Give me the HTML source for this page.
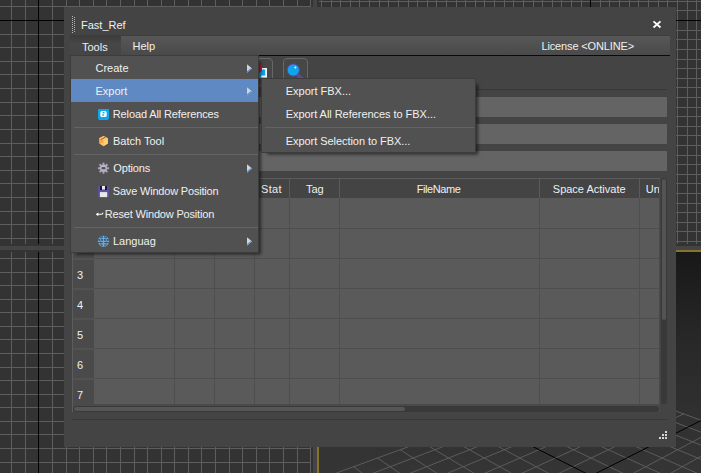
<!DOCTYPE html>
<html><head><meta charset="utf-8"><title>Fast_Ref</title>
<style>
html,body{margin:0;padding:0;}
body{width:701px;height:473px;overflow:hidden;position:relative;background:#333;font-family:"Liberation Sans",sans-serif;font-size:11px;color:#f0f0f0;}
.a{position:absolute;}
.t{position:absolute;white-space:nowrap;line-height:13px;height:13px;}
#win{left:64px;top:7px;width:612px;height:440px;background:#444444;}
#menubar{left:70px;top:35px;width:600px;height:20px;background:linear-gradient(#3e3e3e 0,#3e3e3e 1px,#575757 1px,#4a4a4a 20px);}
#tools{left:70px;top:36px;width:51px;height:19px;background:linear-gradient(#3c3c3c,#474747 40%,#454545);}
.fld{position:absolute;left:73px;width:594px;height:20px;background:#646464;border-radius:1px;}
.btn{position:absolute;top:58px;width:23px;height:26px;border:1px solid #676767;border-radius:4px;background:#474747;}
.menu{position:absolute;background:#515151;border:1px solid #3c3c3c;box-sizing:border-box;box-shadow:4px 3.5px 3px -2px rgba(0,0,0,.55);}
.sep{position:absolute;height:1px;background:#636363;}
.hl{position:absolute;background:#5e89c3;}
.arr{position:absolute;width:6px;height:9px;}
.rh{position:absolute;left:73px;width:21px;background:#444;}
</style></head>
<body>
<svg width="701" height="473" viewBox="0 0 701 473" style="position:absolute;left:0;top:0" shape-rendering="crispEdges">
<rect width="701" height="473" fill="#444444"/>
<rect x="0" y="0" width="313" height="246" fill="#333333"/>
<path d="M11.5 0V244M25.5 0V244M52.5 0V244M66.5 0V244M79.5 0V244M93.5 0V244M106.5 0V244M120.5 0V244M134.5 0V244M147.5 0V244M161.5 0V244M174.5 0V244M188.5 0V244M201.5 0V244M215.5 0V244M229.5 0V244M242.5 0V244M256.5 0V244M269.5 0V244M283.5 0V244M297.5 0V244M310.5 0V244M0 6.5H311M0 34.5H311M0 47.5H311M0 61.5H311M0 74.5H311M0 88.5H311M0 102.5H311M0 115.5H311M0 129.5H311M0 143.5H311M0 156.5H311M0 170.5H311M0 183.5H311M0 197.5H311M0 211.5H311M0 224.5H311M0 238.5H311" stroke="#5e5e5e" stroke-width="1" fill="none"/>
<path d="M38.5 0V244M0 20.5H311" stroke="#000" stroke-width="1" fill="none"/>
<rect x="0" y="250" width="313" height="223" fill="#333333"/>
<path d="M11.5 252V473M25.5 252V473M52.5 252V473M66.5 252V473M79.5 252V473M93.5 252V473M106.5 252V473M120.5 252V473M134.5 252V473M147.5 252V473M161.5 252V473M174.5 252V473M188.5 252V473M201.5 252V473M215.5 252V473M229.5 252V473M242.5 252V473M256.5 252V473M269.5 252V473M283.5 252V473M297.5 252V473M310.5 252V473M0 258.5H311M0 272.5H311M0 285.5H311M0 299.5H311M0 312.5H311M0 326.5H311M0 339.5H311M0 353.5H311M0 367.5H311M0 380.5H311M0 394.5H311M0 407.5H311M0 421.5H311M0 434.5H311M0 448.5H311M0 462.5H311" stroke="#5e5e5e" stroke-width="1" fill="none"/>
<path d="M38.5 252V473" stroke="#000" stroke-width="1" fill="none"/>
<rect x="317" y="0" width="384" height="246" fill="#333333"/>
<path d="M321.5 0V244M331.5 0V244M340.5 0V244M350.5 0V244M359.5 0V244M369.5 0V244M379.5 0V244M388.5 0V244M398.5 0V244M408.5 0V244M417.5 0V244M427.5 0V244M436.5 0V244M446.5 0V244M456.5 0V244M465.5 0V244M475.5 0V244M484.5 0V244M494.5 0V244M504.5 0V244M513.5 0V244M523.5 0V244M533.5 0V244M542.5 0V244M552.5 0V244M561.5 0V244M571.5 0V244M581.5 0V244M600.5 0V244M609.5 0V244M619.5 0V244M629.5 0V244M638.5 0V244M648.5 0V244M658.5 0V244M667.5 0V244M677.5 0V244M687.5 0V244M696.5 0V244M319 1.5H701M319 10.5H701M319 30.5H701M319 39.5H701M319 49.5H701M319 59.5H701M319 68.5H701M319 78.5H701M319 87.5H701M319 97.5H701M319 107.5H701M319 116.5H701M319 126.5H701M319 135.5H701M319 145.5H701M319 155.5H701M319 164.5H701M319 174.5H701M319 183.5H701M319 193.5H701M319 203.5H701M319 212.5H701M319 222.5H701M319 231.5H701M319 241.5H701" stroke="#5e5e5e" stroke-width="1" fill="none"/>
<path d="M319 20.5H701M590.5 0V244" stroke="#000" stroke-width="1" fill="none"/>
<defs><linearGradient id="pg" x1="0" y1="0" x2="0" y2="1"><stop offset="0" stop-color="#181818"/><stop offset="0.4" stop-color="#282828"/><stop offset="0.72" stop-color="#303030"/><stop offset="1" stop-color="#353535"/></linearGradient><clipPath id="pc"><rect x="319" y="252" width="382" height="221"/></clipPath></defs>
<rect x="317" y="250" width="384" height="223" fill="#88722c"/>
<rect x="319" y="252" width="382" height="221" fill="url(#pg)"/>
<g clip-path="url(#pc)" shape-rendering="auto" fill="none" stroke-width="1"><path d="M591.0 687.8L328.5 475.9M591.0 687.8L853.5 475.9M619.9 664.5L353.6 466.7M562.1 664.5L828.4 466.7M646.4 643.1L377.5 458.0M535.6 643.1L804.5 458.0M670.9 623.3L400.2 449.7M511.1 623.3L781.8 449.7M693.7 604.9L421.7 441.9M488.3 604.9L760.3 441.9M714.8 587.9L442.3 434.4M467.2 587.9L739.7 434.4M734.4 572.0L461.9 427.2M447.6 572.0L720.1 427.2M769.9 543.4L498.4 413.9M412.1 543.4L683.6 413.9M786.0 530.4L515.5 407.6M396.0 530.4L666.5 407.6M801.1 518.2L531.9 401.6M380.9 518.2L650.1 401.6M815.4 506.7L547.6 395.9M366.6 506.7L634.4 395.9M828.8 495.8L562.7 390.4M353.2 495.8L619.3 390.4M841.5 485.6L577.1 385.1M340.5 485.6L604.9 385.1M853.5 475.9L591.0 380.1M328.5 475.9L591.0 380.1" stroke="#5c5c5c"/><path d="M752.8 557.2L480.6 420.4M429.2 557.2L701.4 420.4" stroke="#000"/></g>
</svg>
<div id="win" class="a"></div>

<!-- title bar -->
<svg class="a" style="left:72px;top:16px" width="4" height="18" shape-rendering="crispEdges"><path d="M0.5 0v1m0 1v1m0 1v1m0 1v1m0 1v1m0 1v1m0 1v1m0 1v1m0 1v1m0 1M2.5 1v1m0 1v1m0 1v1m0 1v1m0 1v1m0 1v1m0 1v1m0 1v1m0 1" stroke="#b4b4b4" stroke-width="1" fill="none"/></svg>
<div class="t" style="left:81px;top:19px;">Fast_Ref</div>
<svg class="a" style="left:652px;top:19px" width="10" height="10"><path d="M1.5 2.3L8.5 8.5M8.5 2.3L1.5 8.5" stroke="#fff" stroke-width="1.8" fill="none"/></svg>

<!-- menubar -->
<div id="menubar" class="a"></div>
<div id="tools" class="a"></div>
<div class="a" style="left:70px;top:55px;width:600px;height:1px;background:#0a0a0a"></div>
<div class="t" style="left:82px;top:41px;">Tools</div>
<div class="t" style="left:132.5px;top:40px;">Help</div>
<div class="t" style="left:541.4px;top:40px;letter-spacing:-0.13px">License &lt;ONLINE&gt;</div>

<!-- toolbar -->
<div class="btn" style="left:248px;"></div>
<div class="btn" style="left:283px;"></div>
<svg class="a" style="left:256px;top:60px" width="14" height="20"><rect x="3" y="8" width="8" height="9.6" fill="#f2f2f2"/><path d="M3 12L7.3 9.2L9.2 9.8V15.6H5.2L4.6 18H3z" fill="#0ea0e8"/><path d="M3 3.6H6V11.2L3 13z" fill="#c8183f"/></svg>
<svg class="a" style="left:284px;top:60px" width="24" height="24"><path d="M12.5 14L20 20.5" stroke="#5a4a9c" stroke-width="3.6" fill="none"/><circle cx="9.3" cy="10" r="6.1" fill="#0ea4ee" stroke="#5a4a9c" stroke-width="1"/><circle cx="11.4" cy="7.6" r="1" fill="#fff"/></svg>
<div class="a" style="left:73px;top:89px;width:594px;height:1px;background:#383838"></div>

<!-- fields -->
<div class="fld" style="top:97px"></div>
<div class="fld" style="top:124px"></div>
<div class="fld" style="top:151px"></div>

<!-- table -->
<div class="a" style="left:72px;top:178px;width:588px;height:234px;background:#4a4a4a"></div>
<div class="a" style="left:72px;top:178px;width:588px;height:1px;background:#5c5c5c"></div>
<div class="a" style="left:72px;top:178px;width:1px;height:234px;background:#5c5c5c"></div>
<div class="a" style="left:73px;top:179px;width:586px;height:19px;background:#444"></div>
<div class="a" style="left:94px;top:198px;width:565px;height:206px;background:#5a5a5a"></div>
<svg class="a" style="left:0;top:0" width="701" height="473" shape-rendering="crispEdges">
<path d="M174.5 198V404M214.5 198V404M254.5 198V404M289.5 198V404M339.5 198V404M539.5 198V404M639.5 198V404M94 228.5H659M94 258.5H659M94 288.5H659M94 318.5H659M94 348.5H659M94 378.5H659" stroke="#4e4e4e" stroke-width="1" fill="none"/>
<path d="M94.5 179V198M174.5 179V198M214.5 179V198M254.5 179V198M289.5 179V198M339.5 179V198M539.5 179V198M639.5 179V198" stroke="#5a5a5a" stroke-width="1" fill="none"/>
<path d="M73 229H94M73 259H94M73 289H94M73 319H94M73 349H94M73 379H94" stroke="#525252" stroke-width="2" fill="none"/>
</svg>
<div class="t" style="left:77px;top:209px;">1</div>
<div class="t" style="left:77px;top:239px;">2</div>
<div class="t" style="left:77px;top:269px;">3</div>
<div class="t" style="left:77px;top:299px;">4</div>
<div class="t" style="left:77px;top:329px;">5</div>
<div class="t" style="left:77px;top:359px;">6</div>
<div class="t" style="left:77px;top:389px;">7</div>
<div class="t" style="left:260.9px;top:183px;letter-spacing:0.4px;">Stat</div>
<div class="t" style="left:305.9px;top:183px;letter-spacing:0px;">Tag</div>
<div class="t" style="left:416.8px;top:183px;letter-spacing:-0.43px;">FileName</div>
<div class="t" style="left:552.8px;top:183px;letter-spacing:0px;">Space Activate</div>
<div class="t" style="left:645.8px;top:183px;letter-spacing:0px;width:13.2px;overflow:hidden;">Un</div>
<!-- scrollbars -->
<div class="a" style="left:661px;top:178px;width:6px;height:226px;background:#393939;border-radius:3px"></div>
<div class="a" style="left:662px;top:179px;width:4px;height:141px;background:#545454;border-radius:2px"></div>
<div class="a" style="left:73px;top:406px;width:586px;height:6px;background:#393939;border-radius:3px"></div>
<div class="a" style="left:74px;top:407px;width:331px;height:4px;background:#565656;border-radius:2px"></div>

<!-- status -->
<div class="a" style="left:72px;top:419px;width:596px;height:1px;background:#393939"></div>
<svg class="a" style="left:659px;top:431px" width="8" height="8" shape-rendering="crispEdges"><path d="M6 0h2v2h-2zM3 3h2v2h-2zM6 3h2v2h-2zM0 6h2v2h-2zM3 6h2v2h-2zM6 6h2v2h-2z" fill="#d6d6d6"/></svg>

<!-- Tools popup menu -->
<div class="menu" style="left:70px;top:55px;width:189px;height:198px;"></div>
<div class="hl" style="left:71px;top:79px;width:187px;height:23px;"></div>
<div class="sep" style="left:74px;top:127px;width:184px;"></div>
<div class="sep" style="left:74px;top:154px;width:184px;"></div>
<div class="sep" style="left:74px;top:227px;width:184px;"></div>
<div class="t" style="left:95.5px;top:62px;">Create</div>
<div class="t" style="left:95.5px;top:85px;">Export</div>
<div class="t" style="left:112.8px;top:108px;letter-spacing:-0.13px">Reload All References</div>
<div class="t" style="left:113px;top:135px;">Batch Tool</div>
<div class="t" style="left:113.3px;top:162px;letter-spacing:-0.16px">Options</div>
<div class="t" style="left:112.8px;top:185px;letter-spacing:-0.19px">Save Window Position</div>
<div class="t" style="left:104.8px;top:208px;letter-spacing:-0.18px">Reset Window Position</div>
<div class="t" style="left:113px;top:235px;">Languag</div>
<svg class="arr" style="left:247px;top:63.5px;"><path d="M0 0.3L5.1 4.5L0 8.7z" fill="#d4d4d4"/><path d="M5.1 4.5L0 8.7V7.2L3.6 4.3z" fill="#4a8fdc"/></svg>
<svg class="arr" style="left:247px;top:86.5px;"><path d="M0 0.3L5.1 4.5L0 8.7z" fill="#d4d4d4"/><path d="M5.1 4.5L0 8.7V7.2L3.6 4.3z" fill="#4a8fdc"/></svg>
<svg class="arr" style="left:247px;top:163.5px;"><path d="M0 0.3L5.1 4.5L0 8.7z" fill="#d4d4d4"/><path d="M5.1 4.5L0 8.7V7.2L3.6 4.3z" fill="#4a8fdc"/></svg>
<svg class="arr" style="left:247px;top:236.5px;"><path d="M0 0.3L5.1 4.5L0 8.7z" fill="#d4d4d4"/><path d="M5.1 4.5L0 8.7V7.2L3.6 4.3z" fill="#4a8fdc"/></svg>
<!-- reload icon -->
<svg class="a" style="left:98px;top:109px" width="11" height="11"><path d="M0.8 0h9.4a0.8 0.8 0 0 1 .8 .8v8.7l-1.2 1.5h-8.6l-1.2-1.5v-8.7a.8 .8 0 0 1 .8-.8z" fill="#0ba7ef"/><rect x="2.3" y="2.1" width="6.4" height="5.9" rx="1.6" fill="#ffffff"/><ellipse cx="5.6" cy="3.7" rx="1.2" ry="0.75" fill="#0ba7ef"/><ellipse cx="5.1" cy="6.1" rx="1.2" ry="0.75" fill="#0ba7ef"/></svg>
<!-- batch box icon -->
<svg class="a" style="left:98px;top:135px" width="11" height="12"><path d="M5.5 0.9L9.9 3.3V8.6L5.4 11.3L1.1 8.6V3.3z" fill="#f6a93f"/><path d="M5.5 0.9L9.9 3.3L5.5 5.8L1.1 3.3z" fill="#fbc56d"/><path d="M5.5 5.8L9.9 3.3V8.6L5.4 11.3z" fill="#fbcf80"/><path d="M2.9 4.6L7.7 1.9" stroke="#a4532e" stroke-width="1" fill="none"/><rect x="3.3" y="8.4" width="1.5" height="1" fill="#f2ece6"/></svg>
<!-- options gear icon -->
<svg class="a" style="left:97px;top:162px" width="13" height="13"><g transform="translate(6.5 6.2)" fill="#a9a2b5"><g><rect x="-0.95" y="-5.6" width="1.9" height="11.2" rx=".4"/><rect x="-0.95" y="-5.6" width="1.9" height="11.2" rx=".4" transform="rotate(45)"/><rect x="-0.95" y="-5.6" width="1.9" height="11.2" rx=".4" transform="rotate(90)"/><rect x="-0.95" y="-5.6" width="1.9" height="11.2" rx=".4" transform="rotate(135)"/></g><circle r="3.7" fill="#b2abbd"/><circle r="1.9" fill="#55525c"/><rect x="-1.7" y="-2.3" width="3.4" height="0.9" fill="#d2cadf"/><rect x="-1.7" y="1.3" width="3.4" height="0.9" fill="#d2cadf"/></g></svg>
<!-- save floppy icon -->
<svg class="a" style="left:98px;top:186px" width="11" height="12"><rect x="0" y="0" width="11" height="11.3" rx="1" fill="#5b5099"/><rect x="2" y="0" width="7" height="4" fill="#20123f"/><rect x="4" y="0" width="3" height="3.6" fill="#e9e9ee"/><rect x="1.6" y="5" width="8" height="1.1" fill="#e7252b"/><rect x="1.9" y="6.1" width="7.3" height="5" fill="#e8e8e8"/></svg>
<!-- reset arrow icon -->
<svg class="a" style="left:95px;top:210px" width="10" height="8"><path d="M1.6 4.3H6.6Q8 4.2 7.7 2.6" stroke="#fff" stroke-width="1.1" fill="none"/><path d="M0.8 4.3L3.4 2.4V6.2z" fill="#fff"/></svg>
<!-- language globe icon -->
<svg class="a" style="left:97px;top:235px" width="13" height="13"><circle cx="6.5" cy="6.3" r="5.6" fill="#69b0e8"/><g fill="none" stroke="#3b4654"><path d="M2.8 2.4H10.2M2.4 10H10.6" stroke-width="0.7"/><path d="M1.3 4.9H11.7" stroke-width="1.5"/><path d="M1.1 7.6H11.9" stroke-width="0.9"/><ellipse cx="6.5" cy="6.3" rx="2.9" ry="5.4" stroke-width="0.5"/></g><path d="M6.5 0.7V11.9M3.7 4V5.8M9.3 4V5.8" stroke="#69b0e8" stroke-width="0.9" fill="none"/></svg>


<!-- Export submenu -->
<div class="menu" style="left:261px;top:78px;width:215px;height:75px;"></div>
<div class="sep" style="left:265px;top:127px;width:209px;"></div>
<div class="t" style="left:285.7px;top:85px;">Export FBX...</div>
<div class="t" style="left:285.7px;top:108px;letter-spacing:-0.045px">Export All References to FBX...</div>
<div class="t" style="left:285.7px;top:135px;letter-spacing:-0.05px">Export Selection to FBX...</div>
</body></html>
